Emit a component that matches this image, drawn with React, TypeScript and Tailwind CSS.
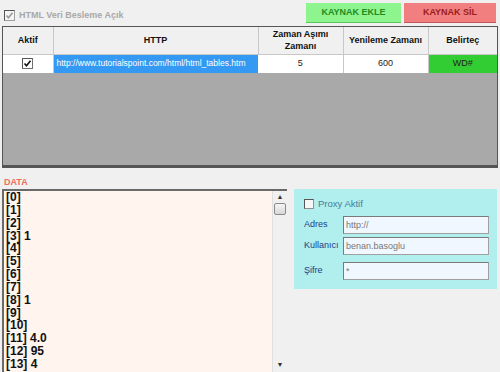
import React from 'react'

const lines = [
  '[0]', '[1]', '[2]', '[3] 1', '[4]', '[5]', '[6]', '[7]', '[8] 1', '[9]', '[10]', '[11] 4.0', '[12] 95', '[13] 4',
]

function Check({ checked, muted }: { checked?: boolean; muted?: boolean }) {
  return (
    <span
      className={`inline-flex w-[11px] h-[11px] items-center justify-center border ${
        muted ? 'border-[#a0a0a0] bg-[#f4f4f4]' : 'border-[#707070] bg-white'
      } border-t-[#555] border-l-[#555]`}
    >
      {checked && (
        <svg width="9" height="9" viewBox="0 0 9 9">
          <path d="M1.5 4.5 L3.5 6.8 L7.5 1.8" fill="none" stroke={muted ? '#999' : '#111'} strokeWidth="1.6" />
        </svg>
      )}
    </span>
  )
}

export default function App() {
  return (
    <div className="w-[500px] h-[372px] overflow-hidden bg-[#f0f0f0] text-[10px] font-['Liberation_Sans',Arial,sans-serif]">
      {/* Top bar */}
      <div className="flex items-start justify-between h-[26px] px-[4px] pt-[3px]">
        <div className="flex items-center gap-[4px] pt-[6px]">
          <Check checked muted />
          <span className="text-[#a8a8a8] font-bold text-[9px]">HTML Veri Besleme Açık</span>
        </div>
        <div className="flex gap-[3px]">
          <button className="w-[95px] h-[20px] bg-[#8ef58e] border-b border-[#5cc45c] text-[#218a21] font-bold text-[9px]">
            KAYNAK EKLE
          </button>
          <button className="w-[92px] h-[20px] bg-[#f27f7f] border-b border-[#c45858] text-[#9c1c1c] font-bold text-[9px]">
            KAYNAK SİL
          </button>
        </div>
      </div>

      {/* Table */}
      <div className="mx-[2px] h-[142px] border border-[#555] border-b-[3px] border-b-[#555] bg-[#a9a9a9]">
        <table className="border-collapse w-full table-fixed">
          <colgroup>
            <col className="w-[50px]" />
            <col className="w-[205px]" />
            <col className="w-[85px]" />
            <col className="w-[85px]" />
            <col />
          </colgroup>
          <thead>
            <tr className="h-[27px] bg-[#f0f0f0] text-[#111] text-[9px]">
              <th className="border-r border-b border-[#c8c8c8] font-bold">Aktif</th>
              <th className="border-r border-b border-[#c8c8c8] font-bold">HTTP</th>
              <th className="border-r border-b border-[#c8c8c8] font-bold leading-[12px]">
                Zaman Aşımı
                <br />
                Zamanı
              </th>
              <th className="border-r border-b border-[#c8c8c8] font-bold">Yenileme Zamanı</th>
              <th className="border-b border-[#c8c8c8] font-bold">Belirteç</th>
            </tr>
          </thead>
          <tbody>
            <tr className="h-[19px] text-[9px]">
              <td className="bg-white border-r border-[#c8c8c8] text-center">
                <span className="inline-flex translate-y-[1px]">
                  <Check checked />
                </span>
              </td>
              <td className="bg-[#3399f3] text-white px-[3px] whitespace-nowrap text-[8.5px]">
                http://www.tutorialspoint.com/html/html_tables.htm
              </td>
              <td className="bg-white border-r border-[#c8c8c8] text-center text-[#222]">5</td>
              <td className="bg-white border-r border-[#c8c8c8] text-center text-[#222]">600</td>
              <td className="bg-[#32cd32] text-center text-[#222]">WD#</td>
            </tr>
          </tbody>
        </table>
      </div>

      {/* Bottom */}
      <div className="flex gap-[7px] pl-[2px] pt-[8px]">
        <div className="w-[285px]">
          <div className="text-[#f26d5b] font-bold text-[9px] h-[13px] pl-[2px]">DATA</div>
          <div className="flex h-[190px] border-t-2 border-l-2 border-[#6a6a6a] bg-[#fff5ee]">
            <div className="flex-1 pl-[2px] text-[12px] leading-[12.85px] font-bold text-[#111]">
              {lines.map((l) => (
                <div key={l}>{l}</div>
              ))}
            </div>
            <div className="w-[15px] bg-[#f0f0f0] border-l border-[#e0e0e0] flex flex-col items-center">
              <span className="text-[7px] text-[#333] leading-[12px] h-[12px]">▲</span>
              <div className="w-[12px] h-[12px] rounded-[2px] border border-[#8a8a8a] bg-gradient-to-b from-[#f5f5f5] to-[#d8d8d8]" />
              <div className="flex-1" />
              <span className="text-[7px] text-[#333] leading-[12px] h-[12px] mb-[8px]">▼</span>
            </div>
          </div>
        </div>

        <div className="w-[203px] h-[100px] mt-[13px] bg-[#b1eeee] pl-[10px] pr-[8px] pt-[9px]">
          <div className="flex items-center gap-[4px] h-[12px]">
            <span className="w-[10px] h-[10px] border border-[#909090] border-t-[#555] border-l-[#555] bg-[#f6f6f6]" />
            <span className="text-[#3f7f9a] text-[9.5px]">Proxy Aktif</span>
          </div>
          <div className="flex flex-col gap-[3px] mt-[6px]">
            {[
              ['Adres', 'http://'],
              ['Kullanıcı', 'benan.basoglu'],
              ['Şifre', '*'],
            ].map(([label, value], i) => (
              <div key={label} className={`flex items-center ${i === 2 ? 'mt-[4px]' : ''}`}>
                <span className="w-[39px] text-[9px] text-[#1a3f8a]">{label}</span>
                <div className="w-[146px] h-[18px] bg-[#f0f7ff] border border-[#a0a0a0] border-t-[#7a7a7a] border-l-[#7a7a7a] text-[9px] text-[#777] pl-[2px] leading-[16px]">
                  {value}
                </div>
              </div>
            ))}
          </div>
        </div>
      </div>
    </div>
  )
}
